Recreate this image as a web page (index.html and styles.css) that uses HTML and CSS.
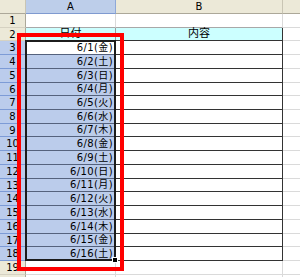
FILE: index.html
```html
<!DOCTYPE html>
<html lang="ja">
<head>
    <meta charset="UTF-8">
    <meta name="viewport" content="width=device-width, initial-scale=1.0">
    <title>日付一覧</title>
    <link rel="stylesheet" href="styles.css">
</head>
<body>
    <div class="sheet">
        <!-- 列見出し -->
        <div class="corner"></div>
        <div class="colhead sel">A</div>
        <div class="colhead">B</div>
        <div class="colhead"></div>

        <!-- 1行目 -->
        <div class="rowhead">1</div>
        <div class="cell above"></div>
        <div class="cell above"></div>
        <div class="cell"></div>

        <!-- 表の見出し -->
        <div class="rowhead">2</div>
        <div class="cell title">日付</div>
        <div class="cell title right">内容</div>
        <div class="cell"></div>

        <!-- 日付の行 -->
        <div class="rowhead sel">3</div>
        <div class="cell date active">6/1(金)</div>
        <div class="cell memo"></div>
        <div class="cell"></div>

        <div class="rowhead sel">4</div>
        <div class="cell date">6/2(土)</div>
        <div class="cell memo"></div>
        <div class="cell"></div>

        <div class="rowhead sel">5</div>
        <div class="cell date">6/3(日)</div>
        <div class="cell memo"></div>
        <div class="cell"></div>

        <div class="rowhead sel">6</div>
        <div class="cell date">6/4(月)</div>
        <div class="cell memo"></div>
        <div class="cell"></div>

        <div class="rowhead sel">7</div>
        <div class="cell date">6/5(火)</div>
        <div class="cell memo"></div>
        <div class="cell"></div>

        <div class="rowhead sel">8</div>
        <div class="cell date">6/6(水)</div>
        <div class="cell memo"></div>
        <div class="cell"></div>

        <div class="rowhead sel">9</div>
        <div class="cell date">6/7(木)</div>
        <div class="cell memo"></div>
        <div class="cell"></div>

        <div class="rowhead sel">10</div>
        <div class="cell date">6/8(金)</div>
        <div class="cell memo"></div>
        <div class="cell"></div>

        <div class="rowhead sel">11</div>
        <div class="cell date">6/9(土)</div>
        <div class="cell memo"></div>
        <div class="cell"></div>

        <div class="rowhead sel">12</div>
        <div class="cell date">6/10(日)</div>
        <div class="cell memo"></div>
        <div class="cell"></div>

        <div class="rowhead sel">13</div>
        <div class="cell date">6/11(月)</div>
        <div class="cell memo"></div>
        <div class="cell"></div>

        <div class="rowhead sel">14</div>
        <div class="cell date">6/12(火)</div>
        <div class="cell memo"></div>
        <div class="cell"></div>

        <div class="rowhead sel">15</div>
        <div class="cell date">6/13(水)</div>
        <div class="cell memo"></div>
        <div class="cell"></div>

        <div class="rowhead sel">16</div>
        <div class="cell date">6/14(木)</div>
        <div class="cell memo"></div>
        <div class="cell"></div>

        <div class="rowhead sel">17</div>
        <div class="cell date">6/15(金)</div>
        <div class="cell memo"></div>
        <div class="cell"></div>

        <div class="rowhead sel">18</div>
        <div class="cell date">6/16(土)</div>
        <div class="cell memo"></div>
        <div class="cell"></div>

        <!-- 表の下 -->
        <div class="rowhead">19</div>
        <div class="cell"></div>
        <div class="cell"></div>
        <div class="cell"></div>

        <div class="rowhead"></div>
        <div class="cell"></div>
        <div class="cell"></div>
        <div class="cell"></div>

        <!-- 選択範囲の枠と赤い囲み -->
        <div class="selection"><span class="handle"></span></div>
        <div class="mark"></div>
    </div>
</body>
</html>
```

FILE: styles.css
```css
/* シート全体 */
body {
    margin: 0;
    background: #fff;
    font-family: "DejaVu Sans", "Noto Sans CJK JP", sans-serif;
    font-size: 10px;
    color: #000;
}

.sheet {
    position: relative;
    width: 300px;
    height: 277px;
    overflow: hidden;
    display: grid;
    grid-template-columns: 26px 90px 167px 40px;
    grid-template-rows: 14px;
    grid-auto-rows: 13.72px;
}

.sheet > div {
    box-sizing: border-box;
}

/* 見出し */
.corner,
.colhead {
    background: #ECE9D8;
    border-right: 1px solid #C9C5B4;
    border-bottom: 1px solid #ACA899;
}

.colhead {
    text-align: center;
    line-height: 13px;
}

.colhead.sel {
    background: #BDCEEA;
    border-right-color: #8EA8D8;
    border-bottom-color: #7F9AD0;
}

.rowhead {
    background: #ECE9D8;
    border-right: 1px solid #ACA899;
    border-bottom: 1px solid #D6D2C2;
    text-align: center;
    line-height: 13px;
}

.rowhead.sel {
    background: #BBCCEC;
    border-right-color: #6F8FCF;
    border-bottom-color: #7D9BD6;
}

/* セル */
.cell {
    background: #fff;
    border-right: 1px solid #DADADA;
    border-bottom: 1px solid #DADADA;
    display: flex;
    align-items: flex-end;
    line-height: 12px;
    white-space: nowrap;
}

.cell.above {
    border-bottom-color: #A8A8A8;
}

.cell.title {
    background: #CCFFFF;
    justify-content: center;
    border-bottom-color: #333;
    border-right-color: #9A9A9A;
    font-size: 11px;
}

.cell.right,
.cell.memo {
    border-right-color: #333;
}

.cell.memo {
    border-bottom-color: #333;
}

.cell.date {
    background: #BBCCEB;
    border-bottom-color: #55627D;
    justify-content: flex-end;
    padding-right: 2px;
    letter-spacing: 0.4px;
}

.cell.date.active {
    background: #fff;
}

/* 選択範囲の太枠 */
.selection {
    position: absolute;
    left: 25px;
    top: 40px;
    width: 91px;
    height: 221px;
    border: 2px solid #1C1C1C;
}

.handle {
    position: absolute;
    right: -4px;
    bottom: -4px;
    width: 4px;
    height: 4px;
    background: #000;
    border: 1px solid #fff;
}

/* 赤い囲み */
.mark {
    position: absolute;
    left: 17px;
    top: 33px;
    width: 107px;
    height: 238px;
    border: 4px solid #FF0000;
}
```
